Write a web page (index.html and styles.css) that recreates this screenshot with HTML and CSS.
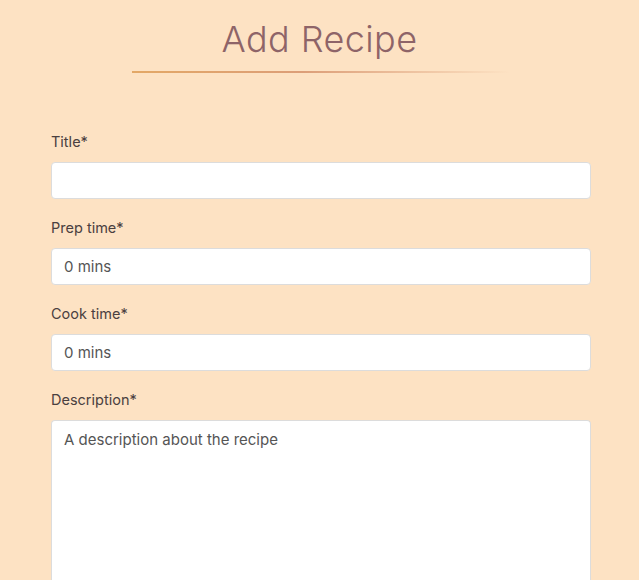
FILE: index.html
```html
<!DOCTYPE html>
<html>
<head>
<meta charset="utf-8">
<link rel="stylesheet" href="styles.css">
</head>
<body>
<header class="page-header">
  <h1 class="page-title">Add Recipe</h1>
  <div class="title-rule"></div>
</header>
<form class="recipe-form">
  <div class="field">
    <label class="field-label">Title*</label>
    <input class="field-input" type="text">
  </div>
  <div class="field">
    <label class="field-label">Prep time*</label>
    <input class="field-input" type="text" value="0 mins">
  </div>
  <div class="field">
    <label class="field-label">Cook time*</label>
    <input class="field-input" type="text" value="0 mins">
  </div>
  <div class="field">
    <label class="field-label">Description*</label>
    <textarea class="field-input field-textarea">A description about the recipe</textarea>
  </div>
</form>
</body>
</html>
```
FILE: styles.css
```css
html, body {
  margin: 0;
  padding: 0;
  background: #fde2c3;
  overflow: hidden;
}
body {
  font-family: "Inter", "Lato", sans-serif;
  height: 580px;
}
.page-header {
  padding-top: 17px;
  display: flex;
  flex-direction: column;
  align-items: center;
}
.page-title {
  margin: 0;
  font-size: 36px;
  line-height: 44px;
  font-weight: 300;
  letter-spacing: 0.4px;
  color: #8e6468;
}
.title-rule {
  margin-top: 10px;
  width: 378px;
  height: 2px;
  margin-left: 3px;
  background: linear-gradient(to right, #e3a866 0%, #dc9e78 45%, rgba(240, 200, 160, 0) 100%);
}
.recipe-form {
  padding: 60px 0 0 51px;
  width: 540px;
  display: flex;
  flex-direction: column;
  gap: 20px;
}
.field {
  display: flex;
  flex-direction: column;
}
.field-label {
  font-size: 14.5px;
  line-height: 18px;
  color: #4a4040;
  margin-bottom: 11px;
}
.field-input {
  box-sizing: border-box;
  width: 540px;
  height: 37px;
  border: 1px solid #dcdcdc;
  border-radius: 4px;
  background: #fff;
  padding: 0 12px;
  font-family: inherit;
  font-size: 15px;
  color: #555;
  outline: none;
}
.field-textarea {
  height: 160px;
  border-bottom: none;
  border-bottom-left-radius: 0;
  border-bottom-right-radius: 0;
  padding-top: 9px;
  resize: none;
  line-height: 20px;
}
```
